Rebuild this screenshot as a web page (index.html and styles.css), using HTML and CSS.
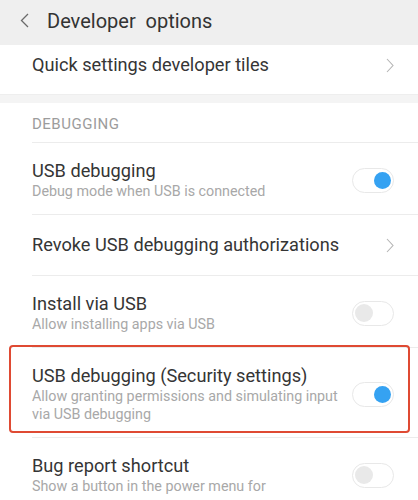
FILE: index.html
```html
<!DOCTYPE html>
<html lang="en">
<head>
<meta charset="utf-8">
<title>Developer options</title>
<link rel="stylesheet" href="styles.css">
</head>
<body>
<div class="screen">
  <header class="appbar">
    <svg class="back" width="9" height="15" viewBox="0 0 9 15"><path d="M8 1 L1.5 7.5 L8 14" fill="none" stroke="#6a6a6a" stroke-width="1.3"/></svg>
    <h1 class="appbar-title">Developer&nbsp; options</h1>
  </header>

  <div class="row row-top">
    <div class="row-inner row-inner-first">
      <div class="texts"><div class="title">Quick settings developer tiles</div></div>
      <svg class="chev" width="8" height="15" viewBox="0 0 8 15"><path d="M1 1 L7 7.5 L1 14" fill="none" stroke="#b4b4b4" stroke-width="1.1"/></svg>
    </div>
  </div>

  <div class="gap"></div>

  <div class="section-label">DEBUGGING</div>

  <div class="row">
    <div class="row-inner">
      <div class="texts">
        <div class="title">USB debugging</div>
        <div class="sub">Debug mode when USB is connected</div>
      </div>
      <div class="toggle on"><span class="knob"></span></div>
    </div>
  </div>

  <div class="row">
    <div class="row-inner row-inner-single">
      <div class="texts"><div class="title">Revoke USB debugging authorizations</div></div>
      <svg class="chev" width="8" height="15" viewBox="0 0 8 15"><path d="M1 1 L7 7.5 L1 14" fill="none" stroke="#b4b4b4" stroke-width="1.1"/></svg>
    </div>
  </div>

  <div class="row">
    <div class="row-inner">
      <div class="texts">
        <div class="title">Install via USB</div>
        <div class="sub">Allow installing apps via USB</div>
      </div>
      <div class="toggle"><span class="knob"></span></div>
    </div>
  </div>

  <div class="row row-highlight">
    <div class="row-inner">
      <div class="texts">
        <div class="title">USB debugging (Security settings)</div>
        <div class="sub">Allow granting permissions and simulating input<br>via USB debugging</div>
      </div>
      <div class="toggle on"><span class="knob"></span></div>
    </div>
  </div>

  <div class="row">
    <div class="row-inner row-inner-last">
      <div class="texts">
        <div class="title">Bug report shortcut</div>
        <div class="sub">Show a button in the power menu for</div>
      </div>
      <div class="toggle"><span class="knob"></span></div>
    </div>
  </div>
</div>
</body>
</html>
```

FILE: styles.css
```css
html, body {
  margin: 0;
  padding: 0;
  background: #ffffff;
}
body {
  font-family: Roboto, "Noto Sans", "Liberation Sans", sans-serif;
  color: #333333;
  overflow: hidden;
  height: 500px;
}
.screen {
  width: 418px;
}
.appbar {
  height: 45px;
  box-sizing: border-box;
  padding: 0 0 4px 20px;
  background: #efefef;
  display: flex;
  align-items: center;
}
.back {
  display: block;
  margin-right: 18px;
}
.appbar-title {
  margin: 0;
  font-size: 20px;
  font-weight: 400;
  line-height: 24px;
  color: #333333;
}
.row {
  position: relative;
  padding-left: 32px;
  background: #ffffff;
}
.row-inner {
  display: flex;
  align-items: center;
  border-top: 1px solid #ececec;
  padding: 17px 24px 14px 0;
}
.row-inner-first {
  border-top: none;
  padding: 9px 24px 18px 0;
}
.row-inner-single {
  padding: 19px 24px 19px 0;
}
.row-inner-last {
  padding-bottom: 8px;
}
.texts {
  flex: 1;
  min-width: 0;
}
.title {
  font-size: 18.2px;
  line-height: 22px;
  color: #353535;
  white-space: nowrap;
}
.sub {
  font-size: 14.3px;
  line-height: 18px;
  color: #a8a8a8;
  white-space: nowrap;
}
.chev {
  display: block;
  flex: none;
}
.gap {
  height: 8px;
  background: #f4f4f4;
  border-top: 1px solid #eeeeee;
}
.section-label {
  padding: 13px 0 10px 32px;
  font-size: 15px;
  line-height: 16px;
  letter-spacing: 0.5px;
  color: #9c9c9c;
}
.toggle {
  flex: none;
  width: 42px;
  height: 25px;
  box-sizing: border-box;
  border: 1px solid #e8e8e8;
  border-radius: 13px;
  background: #ffffff;
  display: flex;
  align-items: center;
  padding: 0 2px;
}
.knob {
  display: block;
  width: 18px;
  height: 18px;
  border-radius: 50%;
  background: #e9e9e9;
}
.toggle.on {
  justify-content: flex-end;
}
.toggle.on .knob {
  width: 17px;
  height: 17px;
  background: #35a2f2;
}
.row-highlight::after {
  content: "";
  position: absolute;
  left: 9px;
  right: 8px;
  top: -2px;
  bottom: 4px;
  border: 2px solid #df4a33;
  border-radius: 4px;
  pointer-events: none;
}
```
